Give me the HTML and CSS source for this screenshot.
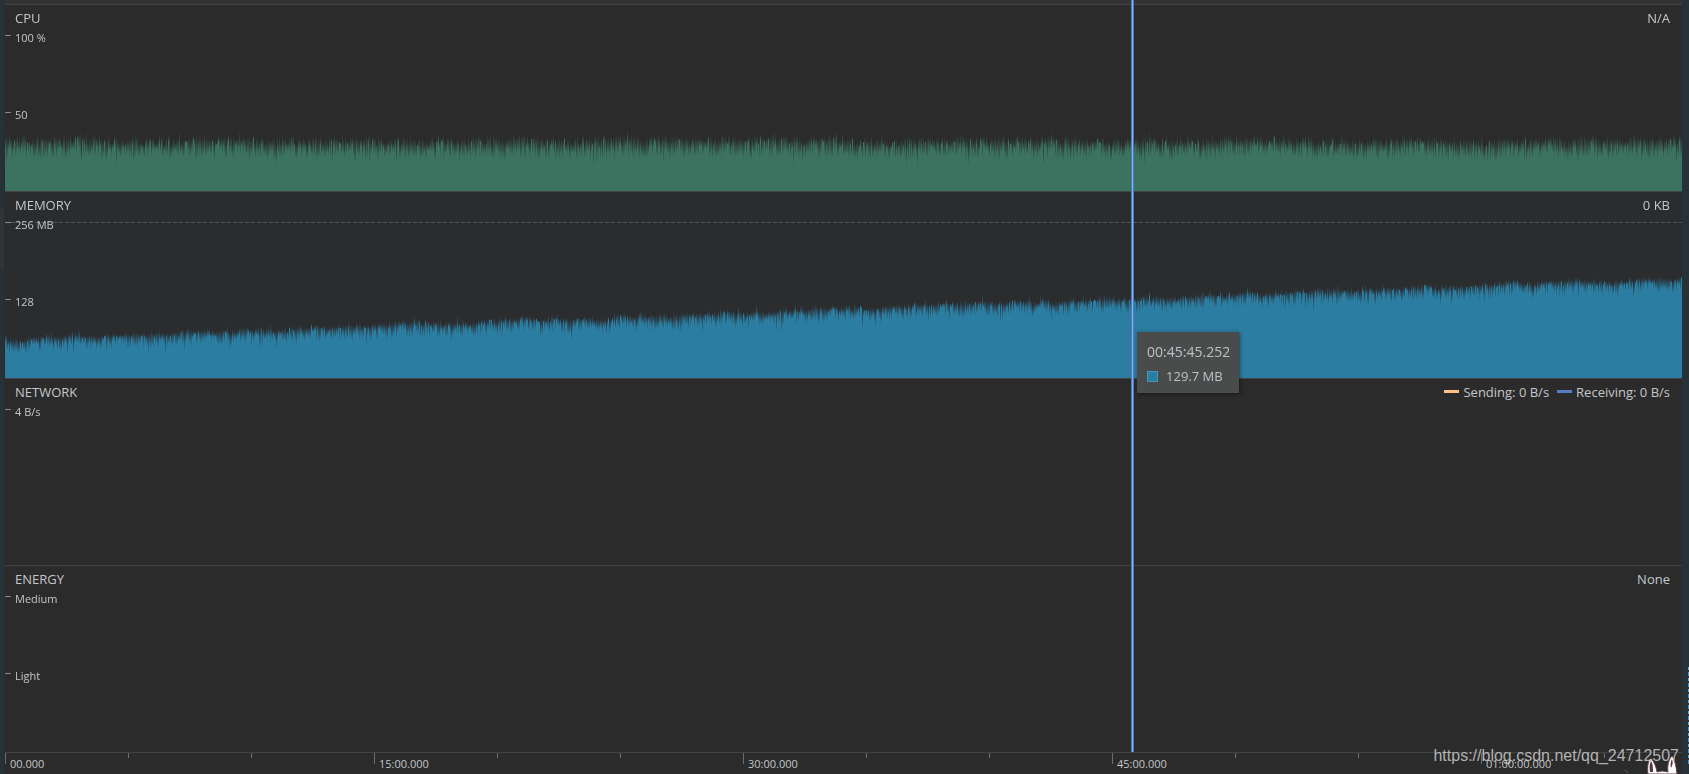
FILE: index.html
```html
<!DOCTYPE html>
<html lang="en">
<head>
<meta charset="utf-8">
<title>Profiler</title>
<link rel="stylesheet" href="styles.css">
</head>
<body>
<div class="window">
  <aside class="edge edge-left"><span class="edge-tab"></span></aside>
  <main class="profiler">
    <div class="toolbar-edge"></div>
    <section class="monitor">
      <canvas class="chart" data-kind="cpu"></canvas>
      <header class="monitor-head"><h2>CPU</h2><span>N/A</span></header>
      <span class="mark mark-top">100 %</span>
      <span class="mark mark-mid">50</span>
    </section>
    <section class="monitor monitor-memory">
      <canvas class="chart" data-kind="memory"></canvas>
      <header class="monitor-head"><h2>MEMORY</h2><span>0 KB</span></header>
      <span class="mark mark-top">256 MB</span>
      <span class="mark mark-mid">128</span>
    </section>
    <section class="monitor">
      <header class="monitor-head"><h2>NETWORK</h2>
        <div class="legend"><span class="key key-send">Sending: 0 B/s</span><span class="key key-receive">Receiving: 0 B/s</span></div>
      </header>
      <span class="mark mark-top">4 B/s</span>
    </section>
    <section class="monitor">
      <header class="monitor-head"><h2>ENERGY</h2><span>None</span></header>
      <span class="mark mark-top">Medium</span>
      <span class="mark mark-mid">Light</span>
    </section>
    <footer class="axis">
      <span class="tick major">00.000</span><span class="tick"></span><span class="tick"></span>
      <span class="tick major">15:00.000</span><span class="tick"></span><span class="tick"></span>
      <span class="tick major">30:00.000</span><span class="tick"></span><span class="tick"></span>
      <span class="tick major">45:00.000</span><span class="tick"></span><span class="tick"></span>
      <span class="tick major">01:00:00.000</span><span class="tick"></span>
    </footer>
    <div class="cursor">
      <div class="tooltip">
        <div class="tooltip-time">00:45:45.252</div>
        <div class="tooltip-value"><i class="swatch"></i>129.7 MB</div>
      </div>
    </div>
  </main>
  <aside class="edge edge-right"><span class="clipped"></span></aside>
  <svg class="ears" width="66" height="20" viewBox="0 0 66 20" aria-hidden="true">
    <path d="M10 16l3 3" stroke="#75595f" stroke-width="1"/>
    <path d="M33 20C32 13 33 7 36 4C39 8 41 12 42 18Q47 16 53 18C52 11 54 5 57 2C60 6 61 12 62 20Z" fill="#fff" stroke="#65454c" stroke-width="1"/>
    <path d="M35 18C34 13 35 9 36 7C38 10 38 14 38 18ZM56 14C55 10 56 7 57 5C58 8 58 10 56 14Z" fill="#57383f"/>
  </svg>
  <a class="watermark" href="https://blog.csdn.net/qq_24712507">https://blog.csdn.net/qq_24712507</a>
</div>
<script src="charts.js"></script>
</body>
</html>
```
FILE: styles.css
```css
* { box-sizing: border-box; }
body {
  margin: 0;
  background: #2b2b2b;
  color: #c3c7ca;
  font: 13px/18px "Open Sans", "Noto Sans", sans-serif;
}
.window {
  position: relative;
  display: flex;
  min-height: 100vh;
  overflow: hidden;
}
.edge { flex: none; background: #263238; }
.edge-left { width: 5px; border-right: 1px solid #2b2b2b; padding-top: 207px; }
.edge-tab { display: block; height: 62px; background: #313335; }
.edge-right { width: 7px; display: flex; align-items: flex-end; justify-content: flex-end; padding-bottom: 8px; }
.clipped {
  width: 1px;
  height: 99px;
  background: repeating-linear-gradient(#7fa9b8 0 3px, #263238 3px 5px, #5f91b8 5px 9px, #263238 9px 11px);
}
.profiler {
  position: relative;
  flex: 1;
  min-width: 0;
  display: flex;
  flex-direction: column;
}
.toolbar-edge { height: 4px; background: #313335; }
.monitor {
  flex: 1;
  position: relative;
  display: flex;
  flex-direction: column;
  border-top: 1px solid #414344;
}
.monitor-memory { background: #2b2c2e; }
.monitor-memory::before {
  content: "";
  position: absolute;
  top: 30px;
  left: 0;
  right: 0;
  height: 1px;
  background: repeating-linear-gradient(90deg, #515355 0 4px, transparent 4px 6px);
}
.chart { position: absolute; left: 0; top: 0; width: 100%; height: 100%; }
.monitor-head {
  position: relative;
  display: flex;
  justify-content: space-between;
  padding: 4px 12px 0 10px;
}
.monitor-head h2 { margin: 0; font: inherit; }
.mark {
  position: absolute;
  left: 0;
  padding-left: 10px;
  font-size: 11px;
  line-height: 16px;
}
.mark::before {
  content: "";
  position: absolute;
  left: 0;
  top: 5px;
  width: 6px;
  height: 1px;
  background: #878a8b;
}
.mark-top { top: 25px; }
.mark-mid { top: 102px; }
.legend { display: flex; gap: 8px; }
.key { display: flex; gap: 4px; }
.key::before { content: ""; width: 15px; height: 3px; margin-top: 7px; }
.key-send::before { background: #ffc187; }
.key-receive::before { background: #587dc8; }
.axis {
  display: flex;
  height: 22px;
  overflow: hidden;
  border-top: 1px solid #414344;
}
.tick {
  position: relative;
  flex: none;
  width: 123px;
  padding: 3px 0 0 5px;
  font-size: 11px;
  line-height: 16px;
}
.tick::before {
  content: "";
  position: absolute;
  left: 0;
  top: 0;
  width: 1px;
  height: 5px;
  background: #6b6d6e;
}
.major::before { height: 11px; }
.cursor {
  position: absolute;
  top: 0;
  bottom: 22px;
  left: 67.15%;
  width: 3px;
  background: #7db4ff;
  border: solid #507ab5;
  border-width: 0 1px;
}
.tooltip {
  position: absolute;
  top: 332px;
  left: 5px;
  padding: 11px 9px 8px 10px;
  background: #4a4c4b;
  color: #b9c3c9;
  white-space: nowrap;
  box-shadow: 1px 1px 4px rgba(0, 0, 0, .45);
}
.tooltip-time { font-size: 14px; }
.tooltip-value { display: flex; align-items: center; gap: 8px; margin-top: 6px; }
.swatch { width: 11px; height: 11px; background: #2b7da2; border: 1px solid #4096bd; }
.ears { position: absolute; right: 8px; bottom: 0; }
.watermark {
  position: absolute;
  right: 10px;
  bottom: 9px;
  font: 16px/18px "Liberation Sans", Arial, sans-serif;
  color: rgba(205, 205, 205, .85);
  text-decoration: none;
}
```
FILE: charts.js
```js
// Deterministic noise keeps the sampled bands stable between redraws.
function noise(seed) {
  return function () {
    seed = (seed * 1664525 + 1013904223) >>> 0;
    return seed / 4294967296;
  };
}

var kinds = {
  cpu: { rgb: "59,114,96", start: 41, end: 41, above: 14, below: 6, seed: 7 },
  memory: { rgb: "43,125,162", start: 34, end: 95, above: 7, below: 6, seed: 19 }
};

function draw(canvas) {
  var kind = kinds[canvas.dataset.kind];
  var w = canvas.width = canvas.clientWidth;
  var h = canvas.height = canvas.clientHeight;
  var ctx = canvas.getContext("2d");
  var rand = noise(kind.seed);
  var drift = 0;
  for (var x = 0; x < w; x++) {
    drift = drift * 0.9 + (rand() - 0.5) * 1.6;
    var base = kind.start + (kind.end - kind.start) * x / w + drift;
    var spike = rand() < 0.08 ? 4 : 0;
    var dip = rand() < 0.08 ? 6 : 0;
    var hi = base + 1 + kind.above * (0.35 + rand() * 0.65) + spike;
    var lo = base + 2 - kind.below * rand() * 2 - dip + (rand() < 0.2 ? kind.above * 0.6 : 0);
    lo = Math.min(lo, hi - 1);
    var fade = ctx.createLinearGradient(0, h - hi, 0, h - lo);
    fade.addColorStop(0, "rgba(" + kind.rgb + ",0)");
    fade.addColorStop(1, "rgba(" + kind.rgb + ",1)");
    ctx.fillStyle = fade;
    ctx.fillRect(x, Math.floor(h - hi), 1, Math.ceil(hi) + 1);
  }
}

function drawAll() {
  document.querySelectorAll(".chart").forEach(draw);
}
drawAll();
window.addEventListener("resize", drawAll);
```
